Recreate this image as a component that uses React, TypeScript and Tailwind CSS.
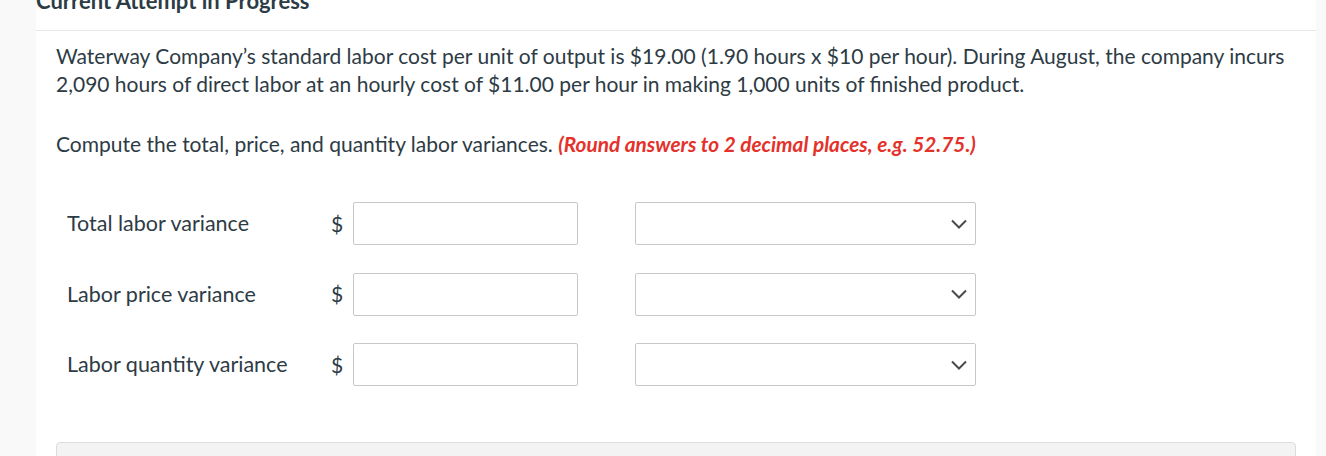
function Chevron() {
    return (
        <svg className="w-[18px] h-[12px]" viewBox="0 0 18 12" fill="none" stroke="#4a4a4a" strokeWidth={2}>
            <path d="M2 2.5l7 7 7-7" />
        </svg>
    );
}

function AnswerRow({ label }: { label: string }) {
    return (
        <div className="flex items-center pl-[11px]">
            <div className="w-[264px] text-[21.5px]">{label}</div>
            <div className="w-[22px] text-[21px]">$</div>
            <div className="w-[225px] h-[43px] border border-[#c8c8c8] rounded-[2px] bg-white" />
            <div className="ml-[57px] w-[341px] h-[43px] border border-[#c8c8c8] rounded-[2px] bg-white flex items-center justify-end pr-[7px]">
                <Chevron />
            </div>
        </div>
    );
}

export default function App() {
    return (
        <div
            className="flex w-[1326px] h-[456px] overflow-hidden bg-[#f9f9f9] text-[#2d3b45]"
            style={{ fontFamily: 'Lato, "Open Sans", sans-serif' }}
        >
            <div className="w-[36px] shrink-0" />
            <main className="w-[1280px] shrink-0 bg-white">
                <div className="-mt-[13px] pb-[15px] border-b border-[#e8e8e8] text-[22px] leading-[28px] font-bold">
                    Current Attempt in Progress
                </div>
                <div className="px-[20px] pt-[11px]">
                    <p className="text-[21px] leading-[28px]">
                        Waterway Company’s standard labor cost per unit of output is $19.00 (1.90 hours x $10 per hour). During August, the company incurs 2,090 hours of direct labor at an hourly cost of $11.00 per hour in making 1,000 units of finished product.
                    </p>
                    <p className="mt-[32px] text-[21px] leading-[28px]">
                        Compute the total, price, and quantity labor variances.{' '}
                        <span className="font-bold italic text-[#e4322b] text-[20.8px]">(Round answers to 2 decimal places, e.g. 52.75.)</span>
                    </p>
                    <div className="mt-[44px] flex flex-col gap-[27.5px]">
                        <AnswerRow label="Total labor variance" />
                        <AnswerRow label="Labor price variance" />
                        <AnswerRow label="Labor quantity variance" />
                    </div>
                    <div className="mt-[56px] h-[60px] border border-[#dcdcdc] rounded-[4px] bg-[#f3f3f3]" />
                </div>
            </main>
        </div>
    );
}
